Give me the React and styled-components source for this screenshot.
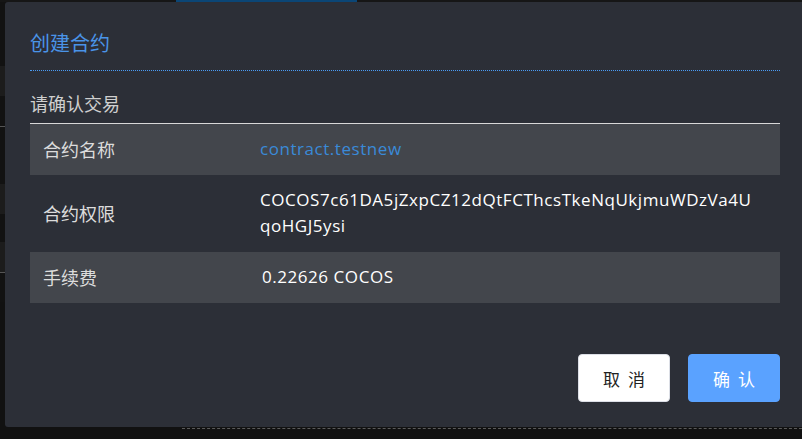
import React from 'react';
import styled, {createGlobalStyle} from 'styled-components';

const GlobalStyle = createGlobalStyle`
  html, body {
    margin: 0;
    padding: 0;
    background: #111111;
    overflow: hidden;
  }
  body {
    font-family: "Open Sans", "Noto Sans CJK SC", sans-serif;
  }
`;

const rows = [
  {id: 1, label: '合约名称', value: 'contract.testnew', tone: 'link', shaded: true},
  {id: 2, label: '合约权限', value: 'COCOS7c61DA5jZxpCZ12dQtFCThcsTkeNqUkjmuWDzVa4UqoHGJ5ysi', tone: 'plain', shaded: false},
  {id: 3, label: '手续费', value: '0.22626 COCOS', tone: 'plain', shaded: true, nudge: true},
];

// stripes of the page peeking out on the left of the dialog
const stripes = [
  {id: 1, size: 64, tone: 'dark'},
  {id: 2, size: 30, tone: 'light'},
  {id: 3, size: 30, tone: 'dark'},
  {id: 4, size: 30, tone: 'dark', line: true},
  {id: 5, size: 28, tone: 'dark'},
  {id: 6, size: 30, tone: 'light'},
  {id: 7, size: 28, tone: 'dark'},
  {id: 8, size: 30, tone: 'light'},
  {id: 9, size: 30, tone: 'dark', line: true},
];

const App = () => {
  return (
    <>
      <GlobalStyle />
      <Backdrop>
        <TopStrip>
          <StripSeg width={176} />
          <StripSeg width={181} active />
          <StripSeg width={445} />
        </TopStrip>
        <SideStripes>
          {stripes.map(s => (
            <Stripe key={s.id} size={s.size} tone={s.tone} line={s.line} />
          ))}
        </SideStripes>
        <BottomHint />
      </Backdrop>

      <Modal>
        <Header>
          <Title>创建合约</Title>
        </Header>
        <Subtitle>请确认交易</Subtitle>
        <Table>
          {rows.map((row) => (
            <Row key={row.id} shaded={row.shaded}>
              <Label>{row.label}</Label>
              <Value tone={row.tone} nudge={row.nudge}>{row.value}</Value>
            </Row>
          ))}
        </Table>
        <Footer>
          <Button type='button' variant='ghost'>取消</Button>
          <Button type='button' variant='primary'>确认</Button>
        </Footer>
      </Modal>
    </>
  )
}

const Backdrop = styled.div`
  position: relative;
  height: 439px;
  background: #111111;
`;

const TopStrip = styled.div`
  display: flex;
  height: 2px;
`;

const StripSeg = styled.span`
  width: ${props => props.width}px;
  background: ${props => props.active ? '#0b4676' : '#161616'};
`;

const SideStripes = styled.ul`
  list-style: none;
  margin: 0;
  padding: 0;
  width: 5px;
`;

const Stripe = styled.li`
  height: ${props => props.size}px;
  box-sizing: border-box;
  background: ${props => props.tone === 'light' ? '#1c1c1c' : '#121212'};
  border-top: ${props => props.line ? '1px solid #555' : 'none'};
`;

const BottomHint = styled.div`
  position: absolute;
  left: 182px;
  right: 0;
  top: 428px;
  border-top: 1px dashed #5a5a5a;
`;

const Modal = styled.div`
  position: absolute;
  left: 5px;
  top: 2px;
  width: 800px;
  height: 425px;
  box-sizing: border-box;
  padding: 0 25px;
  background: #2c2f37;
  border-radius: 3px;
  display: flex;
  flex-direction: column;
`;

const Header = styled.div`
  padding: 27px 0 14px;
  border-bottom: 1px dotted #4a9cf5;
`;

const Title = styled.h2`
  margin: 0;
  font-family: "Noto Sans CJK SC", sans-serif;
  font-weight: 400;
  font-size: 20px;
  line-height: 27px;
  color: #4a94e8;
`;

const Subtitle = styled.div`
  margin-top: 20px;
  font-family: "Noto Sans CJK SC", sans-serif;
  font-size: 18px;
  line-height: 24px;
  color: #cfcfcf;
`;

const Table = styled.div`
  margin-top: 8px;
  border-top: 1px solid #d8d8d8;
`;

const Row = styled.div`
  display: grid;
  grid-template-columns: 230px 1fr;
  align-items: center;
  padding: 12px 20px 13px 0;
  background: ${props => props.shaded ? '#43464c' : 'transparent'};
`;

const Label = styled.div`
  padding-left: 13px;
  font-family: "Noto Sans CJK SC", sans-serif;
  font-size: 18px;
  line-height: 26px;
  color: #dcdcdc;
`;

const Value = styled.div`
  padding-left: ${props => props.nudge ? '2px' : '0'};
  font-size: 17px;
  letter-spacing: 0.55px;
  line-height: 26px;
  word-break: break-all;
  color: ${props => props.tone === 'link' ? '#3a8ad8' : '#ffffff'};
`;

const Footer = styled.div`
  margin-top: auto;
  padding-bottom: 25px;
  display: flex;
  justify-content: flex-end;
  gap: 18px;
`;

const Button = styled.button`
  width: 92px;
  height: 48px;
  border-radius: 4px;
  border: 1px solid ${props => props.variant === 'primary' ? '#5aa2ff' : '#dcdfe6'};
  background: ${props => props.variant === 'primary' ? '#5aa2ff' : '#ffffff'};
  color: ${props => props.variant === 'primary' ? '#ffffff' : '#222222'};
  font-family: "Noto Sans CJK SC", sans-serif;
  font-size: 17px;
  letter-spacing: 8px;
  text-indent: 8px;
  cursor: pointer;
`;

export default App
